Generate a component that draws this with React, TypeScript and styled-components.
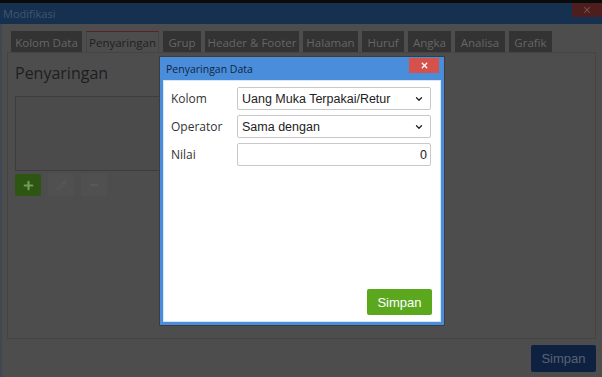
import styled, { createGlobalStyle } from "styled-components";
import { ChevronDown, Plus, Pencil, Minus, X } from "lucide-react";

const GlobalStyle = createGlobalStyle`
  html, body {
    margin: 0;
    padding: 0;
    background: #4d4d4d;
    overflow: hidden;
  }
  * {
    box-sizing: border-box;
  }
`;

const tabs = [
  { name: "Kolom Data", w: 71 },
  { name: "Penyaringan", w: 73, active: true },
  { name: "Grup", w: 38 },
  { name: "Header & Footer", w: 94 },
  { name: "Halaman", w: 55 },
  { name: "Huruf", w: 42 },
  { name: "Angka", w: 43 },
  { name: "Analisa", w: 50 },
  { name: "Grafik", w: 43 },
];

const App = () => {
  return (
    <Screen>
      <GlobalStyle />
      <TopStrip />
      <TitleBar>
        <WindowTitle>Modifikasi</WindowTitle>
        <WindowClose>
          <X size={10} strokeWidth={2.5} />
        </WindowClose>
      </TitleBar>
      <WindowBody>
        <TabRow>
          {tabs.map((t) => (
            <Tab key={t.name} $w={t.w} $active={!!t.active}>
              {t.name}
            </Tab>
          ))}
        </TabRow>
        <Panel>
          <PanelHeading>Penyaringan</PanelHeading>
          <FilterList />
          <ToolRow>
            <ToolButton $kind="add">
              <Plus size={13} strokeWidth={4} />
            </ToolButton>
            <ToolButton>
              <Pencil size={11} strokeWidth={2} />
            </ToolButton>
            <ToolButton>
              <Minus size={12} strokeWidth={3} />
            </ToolButton>
          </ToolRow>
        </Panel>
        <Footer>
          <SaveButton>Simpan</SaveButton>
        </Footer>
      </WindowBody>

      <Dialog>
        <DialogHeader>
          <DialogTitle>Penyaringan Data</DialogTitle>
          <DialogClose>
            <X size={9} strokeWidth={3.5} />
          </DialogClose>
        </DialogHeader>
        <DialogBody>
          <FieldRow>
            <FieldLabel>Kolom</FieldLabel>
            <SelectBox>
              <span>Uang Muka Terpakai/Retur</span>
              <ChevronDown size={10} strokeWidth={3} />
            </SelectBox>
          </FieldRow>
          <FieldRow>
            <FieldLabel>Operator</FieldLabel>
            <SelectBox>
              <span>Sama dengan</span>
              <ChevronDown size={10} strokeWidth={3} />
            </SelectBox>
          </FieldRow>
          <FieldRow>
            <FieldLabel>Nilai</FieldLabel>
            <NumberInput>0</NumberInput>
          </FieldRow>
          <Spacer />
          <DialogFooter>
            <GreenButton>Simpan</GreenButton>
          </DialogFooter>
        </DialogBody>
      </Dialog>
    </Screen>
  );
};
export default App;

const Screen = styled.div`
  position: relative;
  display: flex;
  flex-direction: column;
  width: 602px;
  height: 377px;
  background: #4d4d4d;
  font-family: "Open Sans", "Noto Sans", sans-serif;
`;
const TopStrip = styled.div`
  height: 3px;
  background: #0b0b0b;
`;
const TitleBar = styled.div`
  display: flex;
  align-items: flex-start;
  justify-content: space-between;
  height: 21px;
  background: #16304f;
`;
const WindowTitle = styled.span`
  padding: 4px 0 0 3px;
  font-size: 11px;
  line-height: 13px;
  color: #435570;
`;
const WindowClose = styled.div`
  display: flex;
  align-items: center;
  justify-content: center;
  width: 30px;
  height: 14px;
  background: #4e1d1d;
  color: #7a5858;
`;
const WindowBody = styled.div`
  display: flex;
  flex-direction: column;
  flex: 1;
  padding: 7px 6px 5px 5px;
  border-left: 2px solid #3e4752;
`;
const TabRow = styled.div`
  display: flex;
  gap: 4px;
  padding-left: 4px;
`;
const Tab = styled.div<{ $w: number; $active: boolean }>`
  display: flex;
  align-items: center;
  justify-content: center;
  width: ${({ $w }) => $w}px;
  height: 21px;
  font-size: 11.5px;
  white-space: nowrap;
  color: ${({ $active }) => ($active ? "#1f1f1f" : "#666666")};
  background: ${({ $active }) => ($active ? "#4d4d4d" : "#333333")};
  border-top: 1px solid ${({ $active }) => ($active ? "#5e2222" : "#333333")};
  border-left: 1px solid ${({ $active }) => ($active ? "#444444" : "#333333")};
  border-right: 1px solid ${({ $active }) => ($active ? "#444444" : "#333333")};
`;
const Panel = styled.div`
  display: flex;
  flex-direction: column;
  height: 287px;
  padding: 10px 7px 0 7px;
  border: 1px solid #444444;
`;
const PanelHeading = styled.div`
  font-size: 16px;
  line-height: 20px;
  color: #1e1e1e;
`;
const FilterList = styled.div`
  width: 320px;
  height: 75px;
  margin-top: 13px;
  border: 1px solid #3d3d3d;
  background: #4b4b4b;
`;
const ToolRow = styled.div`
  display: flex;
  gap: 7px;
  margin-top: 3px;
`;
const ToolButton = styled.div<{ $kind?: string }>`
  display: flex;
  align-items: center;
  justify-content: center;
  width: 26px;
  height: 22px;
  border-radius: 2px;
  background: ${({ $kind }) => ($kind === "add" ? "#2d5613" : "#505050")};
  color: ${({ $kind }) => ($kind === "add" ? "#739a5c" : "#5c5c5c")};
`;
const Footer = styled.div`
  display: flex;
  justify-content: flex-end;
  margin-top: 6px;
`;
const SaveButton = styled.div`
  display: flex;
  align-items: center;
  justify-content: center;
  width: 65px;
  height: 27px;
  border-radius: 2px;
  background: #0f2140;
  color: #586274;
  font-family: "Liberation Sans", Arial, sans-serif;
  font-size: 13px;
`;

/* dialog floats above the dimmed window */
const Dialog = styled.div`
  position: absolute;
  left: 160px;
  top: 57px;
  display: flex;
  flex-direction: column;
  width: 284px;
  height: 268px;
  border: 3px solid #4a8ddb;
  border-top-width: 1px;
  background: #4a8ddb;
  box-shadow: 0 0 0 1px #3c3c3c;
`;
const DialogHeader = styled.div`
  display: flex;
  align-items: flex-start;
  justify-content: space-between;
  height: 22px;
`;
const DialogTitle = styled.span`
  padding: 5px 0 0 3px;
  font-size: 10.5px;
  line-height: 13px;
  color: #13253c;
`;
const DialogClose = styled.div`
  display: flex;
  align-items: center;
  justify-content: center;
  width: 30px;
  height: 15px;
  margin-right: 2px;
  background: #d4514c;
  color: #ffffff;
`;
const DialogBody = styled.div`
  display: flex;
  flex-direction: column;
  flex: 1;
  gap: 5px;
  padding: 6px 8px 6px 7px;
  background: #ffffff;
  border: 1px solid #d7e6f7;
`;
const FieldRow = styled.div`
  display: flex;
  align-items: center;
`;
const FieldLabel = styled.span`
  width: 66px;
  font-size: 12px;
  color: #333333;
`;
const SelectBox = styled.div`
  display: flex;
  align-items: center;
  justify-content: space-between;
  width: 194px;
  height: 23px;
  padding: 0 6px 0 4px;
  border: 1px solid #c8c8c8;
  border-radius: 2px;
  font-family: "Liberation Sans", Arial, sans-serif;
  font-size: 12.5px;
  color: #222222;
`;
const NumberInput = styled.div`
  display: flex;
  align-items: center;
  justify-content: flex-end;
  width: 194px;
  height: 23px;
  padding: 0 3px 0 4px;
  border: 1px solid #c8c8c8;
  border-radius: 2px;
  font-family: "Liberation Sans", Arial, sans-serif;
  font-size: 12.5px;
  color: #222222;
`;
const Spacer = styled.div`
  flex: 1;
`;
const DialogFooter = styled.div`
  display: flex;
  justify-content: flex-end;
`;
const GreenButton = styled.div`
  display: flex;
  align-items: center;
  justify-content: center;
  width: 65px;
  height: 26px;
  border-radius: 2px;
  background: #5ba81f;
  color: #ffffff;
  font-family: "Liberation Sans", Arial, sans-serif;
  font-size: 13px;
`;
